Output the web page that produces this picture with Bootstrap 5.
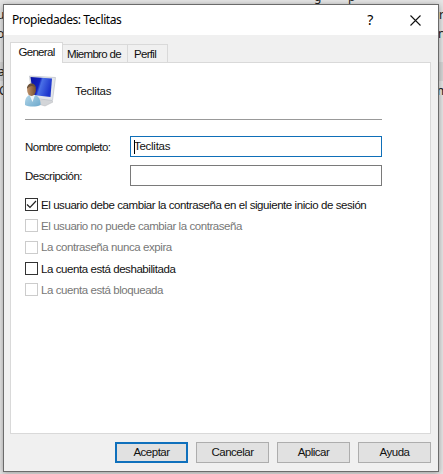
<!DOCTYPE html>
<html lang="es">
<head>
<meta charset="utf-8">
<meta name="viewport" content="width=device-width, initial-scale=1">
<title>Propiedades: Teclitas</title>
<link href="https://cdn.jsdelivr.net/npm/bootstrap@5.3.0/dist/css/bootstrap.min.css" rel="stylesheet">
<style>
body{width:443px;height:474px;background:#e5e5e5;font:11.5px/14px "Liberation Sans",Arial,sans-serif;color:#111;letter-spacing:-.43px}
.desk{width:443px;height:474px;padding:4px 4px 2px 3px}
.behind{position:absolute;font:12px/14px "Noto Sans",sans-serif;color:#222}
.band{position:absolute;left:0;top:62px;width:443px;height:19px;background:#d6d6d6}
.dialog-win{position:relative;width:436px;height:468px;background:#f0f0f0;border:1px solid #6b6b6b;box-shadow:0 1px 6px rgba(0,0,0,.35)}
.titlebar{height:30px;padding:0 17px 0 8px;font:12px/30px "Noto Sans",sans-serif;color:#000;letter-spacing:-.42px}
.help{font-size:14px;margin-right:37px}
.tabs-row{height:27px;padding:7px 0 0 6px;letter-spacing:-.68px}
.tab-item{height:18px;border:1px solid #d9d9d9;border-bottom:0;border-left:0;background:#f0f0f0;line-height:18px}
.tab-item.current{height:21px;border-left:1px solid #d9d9d9;background:#fff;width:53px;margin-bottom:-1px;z-index:1;position:relative;line-height:18px}
.panel{width:421px;height:372px;margin-left:6px;background:#fff;border:1px solid #d9d9d9;padding:11px 0 0 14px}
.acct{margin-left:17px;letter-spacing:-.27px}
.rule{width:357px;height:1px;background:#999;margin-top:11px}
.field-label{width:105px;letter-spacing:-.53px}
.field{width:252px;height:21px;border:1px solid #7a7a7a;border-radius:0;padding:0 3px;line-height:19px;background:#fff;color:#111;letter-spacing:-.27px}
.field.active-field{border-color:#0f6fb8}
.caret{width:1px;height:14px;background:#000;margin-right:-1px}
.chk{width:13px;height:13px;border:1px solid #333;flex:none;margin-right:3px}
.opt{height:21.3px}
.opt.off{color:#777}.opt.off .chk{border-color:#ccc}
.win-btn{width:73px;height:21px;padding:0;border:1px solid #adadad;border-radius:0;background:#e1e1e1;color:#111;font-size:11.5px;line-height:19px;letter-spacing:-.5px}
.win-btn.main{border:2px solid #0f70bc;line-height:17px}
</style>
<script src="https://cdn.jsdelivr.net/npm/bootstrap@5.3.0/dist/js/bootstrap.bundle.min.js"></script>
</head>
<body class="overflow-hidden">
<div class="desk position-relative overflow-hidden">
  <div class="band"></div>
  <span class="behind" style="left:314px;top:-10px">g</span><span class="behind" style="left:348px;top:-10px">p</span>
  <span class="behind" style="left:-3px;top:8px">u</span><span class="behind" style="left:-3px;top:27px">o</span>
  <span class="behind" style="left:-2px;top:65px">a</span><span class="behind" style="left:-1px;top:84px">C</span>
  <span class="behind" style="left:439px;top:8px">r</span><span class="behind" style="left:438px;top:27px">n</span><span class="behind" style="left:437px;top:84px">m</span>
  <main class="dialog-win">
    <header class="titlebar bg-white d-flex align-items-center">
      <span class="me-auto">Propiedades: Teclitas</span>
      <span class="help">?</span>
      <svg width="11" height="11" viewBox="0 0 11 11" stroke="#111" stroke-width="1.1"><path d="M.5.5l10 10M10.5.5l-10 10"/></svg>
    </header>
    <nav class="tabs-row d-flex align-items-end">
      <div class="tab-item current text-center">General</div>
      <div class="tab-item" style="width:65px;padding-left:4px">Miembro de</div>
      <div class="tab-item" style="width:40px;padding-left:6px">Perfil</div>
    </nav>
    <section class="panel">
      <div class="d-flex align-items-center">
        <svg width="33" height="34" viewBox="0 0 33 34">
          <defs>
            <linearGradient id="scr" x1="0" y1="0" x2="1" y2=".3"><stop offset="0" stop-color="#0a12a0"/><stop offset=".45" stop-color="#1020c0"/><stop offset=".55" stop-color="#4a70e6"/><stop offset="1" stop-color="#1c34cc"/></linearGradient>
            <linearGradient id="bod" x1="0" y1="0" x2="1" y2="1"><stop offset="0" stop-color="#b5d8ea"/><stop offset="1" stop-color="#6ca8cc"/></linearGradient>
            <linearGradient id="skin" x1="0" y1="0" x2="1" y2="0"><stop offset="0" stop-color="#c0926a"/><stop offset="1" stop-color="#77502f"/></linearGradient>
          </defs>
          <path d="M13 26l12-1 3 3-8 4-7-2z" fill="#d3d5d8" stroke="#b4b7bb" stroke-width=".5"/>
          <path d="M4.500 2l26 1.500-3 23L7 24z" fill="#e2e5ea" stroke="#b5bac2" stroke-width=".6"/>
          <path d="M5.500 3l21.500 1.500-1.500 18.500L8 21z" fill="url(#scr)"/>
          <path d="M0 31c-.5-7 2.500-10.500 7.500-10.500S16 25 15.500 31c-4 2-11.500 2-15.500 0z" fill="url(#bod)"/>
          <path d="M4.500 21l3 7 2.500-7z" fill="#eef5f8"/>
          <ellipse cx="6.500" cy="16" rx="4.400" ry="6" fill="url(#skin)"/>
          <path d="M2 15c-.5-7.500 9.500-7.500 9 0-2-4-6-4-9 0z" fill="#6b5138"/>
        </svg>
        <span class="acct">Teclitas</span>
      </div>
      <div class="rule"></div>
      <div class="d-flex align-items-center" style="margin-top:16px">
        <label class="field-label">Nombre completo:</label>
        <div class="field active-field d-flex align-items-center"><i class="caret"></i>Teclitas</div>
      </div>
      <div class="d-flex align-items-center" style="margin-top:8px">
        <label class="field-label">Descripción:</label><div class="field"></div>
      </div>
      <div style="margin-top:8px">
        <div class="opt d-flex align-items-center"><span class="chk d-flex"><svg width="11" height="11" viewBox="0 0 11 11" fill="none" stroke="#222" stroke-width="1.200"><path d="M1 5.500l3 3L10 2"/></svg></span>El usuario debe cambiar la contraseña en el siguiente inicio de sesión</div>
        <div class="opt off d-flex align-items-center"><span class="chk"></span>El usuario no puede cambiar la contraseña</div>
        <div class="opt off d-flex align-items-center"><span class="chk"></span>La contraseña nunca expira</div>
        <div class="opt d-flex align-items-center"><span class="chk"></span>La cuenta está deshabilitada</div>
        <div class="opt off d-flex align-items-center"><span class="chk"></span>La cuenta está bloqueada</div>
      </div>
    </section>
    <footer class="d-flex justify-content-end gap-2" style="padding:8px 7px 0 0">
      <button class="btn win-btn main">Aceptar</button>
      <button class="btn win-btn">Cancelar</button>
      <button class="btn win-btn">Aplicar</button>
      <button class="btn win-btn">Ayuda</button>
    </footer>
  </main>
</div>
</body>
</html>
